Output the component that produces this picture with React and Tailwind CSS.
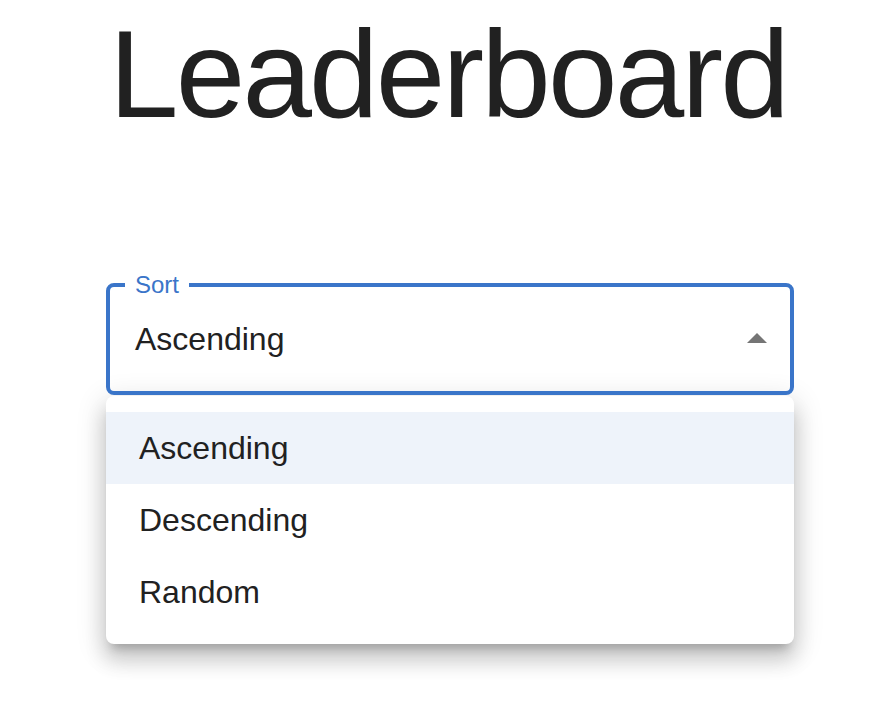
const options = ["Ascending", "Descending", "Random"];

const App = () => {
  const selected = "Ascending";
  return (
    <div className="min-h-[720px] w-[896px] bg-white font-['Liberation_Sans',Arial,sans-serif] text-[#212121]">
      <h1 className="pt-[11px] text-center text-[125px] font-light leading-none tracking-[-2.8px]">
        Leaderboard
      </h1>

      <div className="ml-[106px] mt-[147px] w-[688px]">
        <div className="relative flex h-[112px] items-center justify-between rounded-lg border-[4px] border-[#3a75c9] pl-[25px] pr-[9px]">
          <span className="absolute -top-[17px] left-[15px] bg-white px-[10px] text-[24px] leading-[30px] text-[#3a75c9]">
            Sort
          </span>
          <span className="text-[32px]">{selected}</span>
          <svg width="48" height="48" viewBox="0 0 24 24" className="fill-[#757575]">
            <path d="M7 14l5-5 5 5z" />
          </svg>
        </div>

        <ul className="mt-[1px] rounded-lg bg-white py-4 shadow-[0_10px_10px_-6px_rgba(0,0,0,0.2),0_16px_20px_2px_rgba(0,0,0,0.14),0_6px_28px_4px_rgba(0,0,0,0.12)]">
          {options.map((o) => (
            <li
              key={o}
              className={`flex h-[72px] items-center px-[33px] text-[32px] ${
                o === selected ? "bg-[#eef3fa]" : ""
              }`}
            >
              {o}
            </li>
          ))}
        </ul>
      </div>
    </div>
  );
};

export default App;
